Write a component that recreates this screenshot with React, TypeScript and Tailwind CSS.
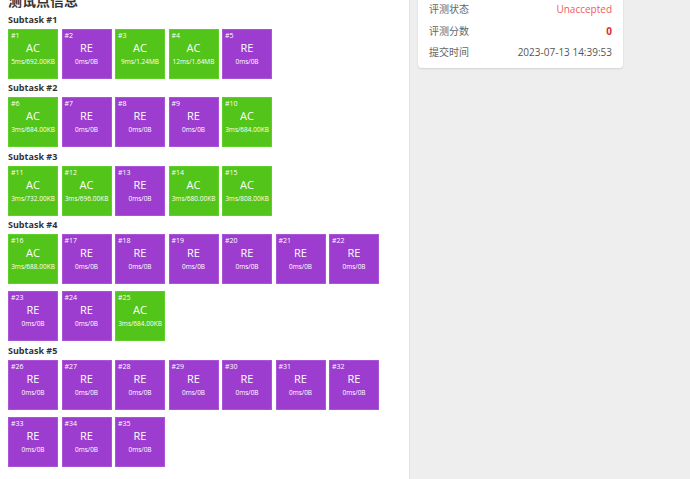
type Case = { id: number; status: "AC" | "RE"; info: string };

const subtasks: Case[][] = [
    [
        { id: 1, status: "AC", info: "5ms/692.00KB" },
        { id: 2, status: "RE", info: "0ms/0B" },
        { id: 3, status: "AC", info: "9ms/1.24MB" },
        { id: 4, status: "AC", info: "12ms/1.64MB" },
        { id: 5, status: "RE", info: "0ms/0B" },
    ],
    [
        { id: 6, status: "AC", info: "3ms/684.00KB" },
        { id: 7, status: "RE", info: "0ms/0B" },
        { id: 8, status: "RE", info: "0ms/0B" },
        { id: 9, status: "RE", info: "0ms/0B" },
        { id: 10, status: "AC", info: "3ms/684.00KB" },
    ],
    [
        { id: 11, status: "AC", info: "3ms/732.00KB" },
        { id: 12, status: "AC", info: "3ms/696.00KB" },
        { id: 13, status: "RE", info: "0ms/0B" },
        { id: 14, status: "AC", info: "3ms/680.00KB" },
        { id: 15, status: "AC", info: "3ms/808.00KB" },
    ],
    [
        { id: 16, status: "AC", info: "3ms/688.00KB" },
        { id: 17, status: "RE", info: "0ms/0B" },
        { id: 18, status: "RE", info: "0ms/0B" },
        { id: 19, status: "RE", info: "0ms/0B" },
        { id: 20, status: "RE", info: "0ms/0B" },
        { id: 21, status: "RE", info: "0ms/0B" },
        { id: 22, status: "RE", info: "0ms/0B" },
        { id: 23, status: "RE", info: "0ms/0B" },
        { id: 24, status: "RE", info: "0ms/0B" },
        { id: 25, status: "AC", info: "3ms/684.00KB" },
    ],
    [
        { id: 26, status: "RE", info: "0ms/0B" },
        { id: 27, status: "RE", info: "0ms/0B" },
        { id: 28, status: "RE", info: "0ms/0B" },
        { id: 29, status: "RE", info: "0ms/0B" },
        { id: 30, status: "RE", info: "0ms/0B" },
        { id: 31, status: "RE", info: "0ms/0B" },
        { id: 32, status: "RE", info: "0ms/0B" },
        { id: 33, status: "RE", info: "0ms/0B" },
        { id: 34, status: "RE", info: "0ms/0B" },
        { id: 35, status: "RE", info: "0ms/0B" },
    ],
];

function CaseBox({ item }: { item: Case }) {
    const color = item.status === "AC"
        ? "bg-[#52c41a] border-[#5fcf2a]"
        : "bg-[#9d3dcf] border-[#a955d6]";

    return (
        <div className={`w-[50px] h-[50px] border text-white flex flex-col pt-[1px] ${color}`}>
            <p className="px-[2px] text-[7px] leading-[9px]">#{item.id}</p>
            <p className="mt-[1px] text-center text-[11px] leading-[14px]">{item.status}</p>
            <p className="mt-[2px] text-center text-[6.5px] leading-[9px] whitespace-nowrap">{item.info}</p>
        </div>
    );
}

export default function App() {
    return (
        <div className="flex w-[690px] h-[479px] overflow-hidden text-[#333] font-['Open_Sans','Noto_Sans_CJK_SC',sans-serif]">
            <section className="w-[409px] shrink-0 bg-white pl-2">
                <h2 className="-mt-[8px] h-[18px] text-[14px] leading-[18px] font-bold">测试点信息</h2>
                {
                    subtasks.map((cases, index) =>
                        <article key={index}>
                            <h3 className="mt-[3.5px] mb-[3px] h-[12px] text-[9px] leading-[12px] font-bold">Subtask #{index + 1}</h3>
                            <div className="flex flex-wrap w-[380px] gap-x-[3.5px] gap-y-[7px]">
                                {cases.map((item) => <CaseBox key={item.id} item={item} />)}
                            </div>
                        </article>
                    )
                }
            </section>

            <section className="grow bg-[#eeeeee] border-l border-[#e2e2e2] px-2">
                <div className="-mt-[20px] pt-[18.75px] pb-[5px] px-[11px] w-[205px] bg-white rounded-[4px] shadow-[0_1px_2px_rgba(0,0,0,0.12)] text-[10px]">
                    <div className="h-[21.5px] flex items-center justify-between">
                        <span className="text-[#666]">评测状态</span>
                        <span className="text-[#ef5b5b]">Unaccepted</span>
                    </div>
                    <div className="h-[21.5px] flex items-center justify-between">
                        <span className="text-[#666]">评测分数</span>
                        <span className="text-[#e02b2b] font-bold">0</span>
                    </div>
                    <div className="h-[21.5px] flex items-center justify-between">
                        <span className="text-[#666]">提交时间</span>
                        <span className="text-[#555]">2023-07-13 14:39:53</span>
                    </div>
                </div>
            </section>
        </div>
    );
}
